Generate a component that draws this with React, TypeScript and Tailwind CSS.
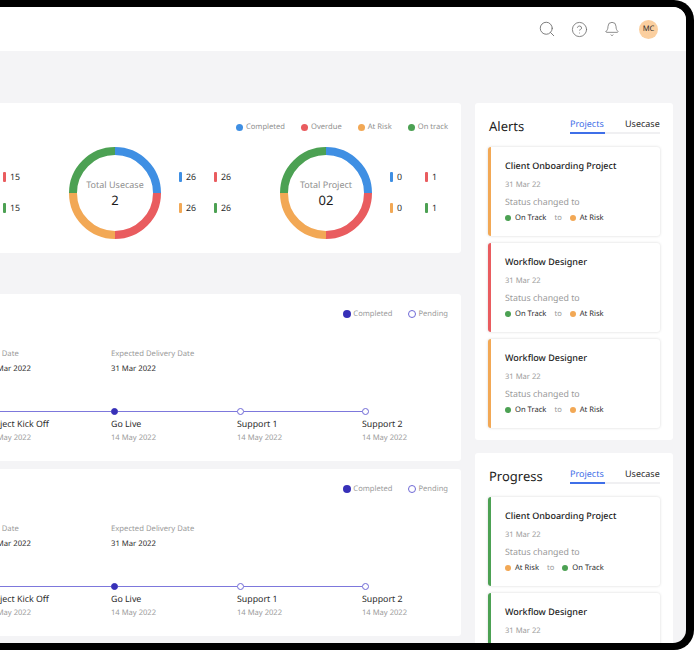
import React from "react";
import { Search, CircleHelp, Bell } from "lucide-react";

const font = { fontFamily: '"Noto Sans", sans-serif' };

const Donut = ({ label, value }: { label: string; value: string }) => (
  <div className="relative w-[92px] h-[92px] shrink-0">
    <svg width="92" height="92" viewBox="0 0 92 92">
      <path d="M46 4 A42 42 0 0 1 88 46" fill="none" stroke="#3f8fe3" strokeWidth="8" />
      <path d="M88 46 A42 42 0 0 1 46 88" fill="none" stroke="#e95c5f" strokeWidth="8" />
      <path d="M46 88 A42 42 0 0 1 4 46" fill="none" stroke="#f2a855" strokeWidth="8" />
      <path d="M4 46 A42 42 0 0 1 46 4" fill="none" stroke="#4ca153" strokeWidth="8" />
    </svg>
    <div className="absolute inset-0 flex flex-col items-center pt-[31px]">
      <span className="text-[9px] leading-[13px] text-[#8f8f8f] whitespace-nowrap">{label}</span>
      <span className="text-[13px] leading-[18px] text-[#1c1c1c]">{value}</span>
    </div>
  </div>
);

const Stat = ({ color, value }: { color: string; value: string }) => (
  <div className="flex items-center gap-[4px] w-[35px] h-[10px]">
    <div className={`w-[3px] h-[10px] rounded-[1px] ${color}`} />
    <span className="text-[8.8px] leading-[10px] text-[#2b2b2b]">{value}</span>
  </div>
);

const DonutGroup = ({ label, total, nums }: { label: string; total: string; nums: string[] }) => (
  <div className="flex items-center w-[211px] shrink-0">
    <Donut label={label} value={total} />
    <div className="ml-[18px] grid grid-cols-2 gap-y-[21px] w-[70px] -mt-[1px]">
      <Stat color="bg-[#3f8fe3]" value={nums[0]} />
      <Stat color="bg-[#e95c5f]" value={nums[1]} />
      <Stat color="bg-[#f2a855]" value={nums[2]} />
      <Stat color="bg-[#4ca153]" value={nums[3]} />
    </div>
  </div>
);

const LegendItem = ({ color, label }: { color: string; label: string }) => (
  <div className="flex items-center gap-[3px]">
    <div className={`w-[7px] h-[7px] rounded-full ${color}`} />
    <span className="text-[7.6px] leading-[12px] text-[#8f8f8f]">{label}</span>
  </div>
);

const Step = ({ title, done, last, width }: { title: string; done?: boolean; last?: boolean; width: string }) => (
  <div className={`shrink-0 ${width}`}>
    <div className="flex items-center h-[7px]">
      <div
        className={`w-[7px] h-[7px] rounded-full shrink-0 border border-[#6f69d6] ${done ? "bg-[#3730b8] border-[#3730b8]" : "bg-white"}`}
      />
      {!last && <div className="flex-1 h-px bg-[#7d78dc]" />}
    </div>
    <div className="text-[8.8px] leading-[13px] mt-[3px] text-[#2b2b2b] whitespace-nowrap">{title}</div>
    <div className="text-[7.6px] leading-[12px] mt-[1px] text-[#9a9a9a] whitespace-nowrap">14 May 2022</div>
  </div>
);

const TimelineCard = ({ className }: { className: string }) => (
  <div className={`bg-white rounded-[3px] h-[167px] pt-[14px] pl-[136px] ${className}`}>
    <div className="flex justify-end items-center gap-[16px] pr-[13px] h-[12px]">
      <div className="flex items-center gap-[2px]">
        <div className="w-[8px] h-[8px] rounded-full bg-[#3730b8]" />
        <span className="text-[7.6px] leading-[12px] text-[#9a9a9a]">Completed</span>
      </div>
      <div className="flex items-center gap-[2px]">
        <div className="w-[8px] h-[8px] rounded-full bg-white border border-[#6f69d6]" />
        <span className="text-[7.6px] leading-[12px] text-[#9a9a9a]">Pending</span>
      </div>
    </div>
    <div className="flex mt-[28px] h-[30px]">
      <div className="w-[125px]">
        <div className="text-[7.7px] leading-[12px] text-[#9a9a9a]">End Date</div>
        <div className="text-[7.7px] leading-[12px] mt-[3px] text-[#2b2b2b]">31 Mar 2022</div>
      </div>
      <div className="w-[125px]">
        <div className="text-[7.7px] leading-[12px] text-[#9a9a9a]">Expected Delivery Date</div>
        <div className="text-[7.7px] leading-[12px] mt-[3px] text-[#2b2b2b]">31 Mar 2022</div>
      </div>
    </div>
    <div className="flex mt-[30px]">
      <Step title="Project Kick Off" done width="w-[125px]" />
      <Step title="Go Live" done width="w-[126px]" />
      <Step title="Support 1" width="w-[125px]" />
      <Step title="Support 2" last width="w-[60px]" />
    </div>
  </div>
);

const Status = ({ color, label }: { color: string; label: string }) => (
  <div className="flex items-center gap-[4px]">
    <div className={`w-[6px] h-[6px] rounded-full ${color}`} />
    <span className="text-[7.6px] leading-[12px] text-[#2b2b2b]">{label}</span>
  </div>
);

const Tile = ({ title, bar, from, to }: { title: string; bar: string; from: [string, string]; to: [string, string] }) => (
  <div className={`bg-white h-[89px] rounded-[3px] border-l-[3px] shadow-[0_0_3px_rgba(0,0,0,0.16)] pl-[14px] pt-[12px] ${bar}`}>
    <div className="text-[9px] leading-[14px] font-medium text-[#222222] whitespace-nowrap">{title}</div>
    <div className="text-[7.6px] leading-[12px] mt-[6px] text-[#9a9a9a]">31 Mar 22</div>
    <div className="text-[8.8px] leading-[13px] mt-[5px] text-[#9a9a9a]">Status changed to</div>
    <div className="flex items-center gap-[8px] mt-[3px]">
      <Status color={from[0]} label={from[1]} />
      <span className="text-[7.6px] leading-[12px] text-[#9a9a9a]">to</span>
      <Status color={to[0]} label={to[1]} />
    </div>
  </div>
);

const Tabs = () => (
  <div className="flex w-[90px] border-b-2 border-[#f0f0f2] text-[9px] leading-[13px] h-[17px]">
    <div className="w-[35px] h-[17px] text-[#3f6fe8] border-b-2 border-[#3f6fe8]">Projects</div>
    <div className="ml-[20px] text-[#2b2b2b]">Usecase</div>
  </div>
);

const green: [string, string] = ["bg-[#4ca153]", "On Track"];
const orange: [string, string] = ["bg-[#f2a855]", "At Risk"];

export default function App() {
  return (
    <div className="w-[696px] h-[650px] bg-white overflow-hidden [text-rendering:geometricPrecision]" style={font}>
      <div className="w-[694px] h-[650px] bg-black border-t-[7px] border-r-[8px] border-b-[7px] border-black rounded-r-[20px]">
        <div className="h-full bg-[#f4f4f6] rounded-r-[13px] overflow-hidden">
          <div className="h-[44px] bg-white flex items-center justify-end pr-[28px] text-[#707070]">
            <Search size={18} strokeWidth={1.2} />
            <CircleHelp size={17} strokeWidth={1.2} className="ml-[15px]" />
            <Bell size={16} strokeWidth={1.2} className="ml-[16px]" />
            <div className="w-[19px] h-[19px] ml-[19px] mt-[1px] rounded-full bg-[#fbcf9f] flex items-center justify-center text-[7.6px] text-[#2b2b2b]">
              MC
            </div>
          </div>

          <div className="flex pt-[52px]">
            <div className="w-[611px] -ml-[150px] shrink-0">
              <div className="bg-white rounded-[3px] h-[150px] pt-[18px] pl-[8px]">
                <div className="flex justify-end gap-[16px] pr-[13px] h-[12px]">
                  <LegendItem color="bg-[#3f8fe3]" label="Completed" />
                  <LegendItem color="bg-[#e95c5f]" label="Overdue" />
                  <LegendItem color="bg-[#f2a855]" label="At Risk" />
                  <LegendItem color="bg-[#4ca153]" label="On track" />
                </div>
                <div className="flex mt-[14px]">
                  <DonutGroup label="Total Task" total="30" nums={["15", "15", "15", "15"]} />
                  <DonutGroup label="Total Usecase" total="2" nums={["26", "26", "26", "26"]} />
                  <DonutGroup label="Total Project" total="02" nums={["0", "1", "0", "1"]} />
                </div>
              </div>
              <TimelineCard className="mt-[41px]" />
              <TimelineCard className="mt-[8px]" />
            </div>

            <div className="w-[198px] ml-[14px] shrink-0">
              <div className="bg-white rounded-[3px] h-[337px] pt-[14px] px-[13px]">
                <div className="flex justify-between items-start h-[30px]">
                  <span className="pl-[1px] text-[13px] leading-[18px] text-[#222222]">Alerts</span>
                  <Tabs />
                </div>
                <div className="flex flex-col gap-[7px]">
                  <Tile title="Client Onboarding Project" bar="border-[#f2a855]" from={green} to={orange} />
                  <Tile title="Workflow Designer" bar="border-[#e95c5f]" from={green} to={orange} />
                  <Tile title="Workflow Designer" bar="border-[#f2a855]" from={green} to={orange} />
                </div>
              </div>
              <div className="bg-white rounded-[3px] h-[300px] mt-[13px] pt-[14px] px-[13px]">
                <div className="flex justify-between items-start h-[30px]">
                  <span className="pl-[1px] text-[13px] leading-[18px] text-[#222222]">Progress</span>
                  <Tabs />
                </div>
                <div className="flex flex-col gap-[7px]">
                  <Tile title="Client Onboarding Project" bar="border-[#4ca153]" from={orange} to={green} />
                  <Tile title="Workflow Designer" bar="border-[#4ca153]" from={orange} to={green} />
                </div>
              </div>
            </div>
          </div>
        </div>
      </div>
    </div>
  );
}
